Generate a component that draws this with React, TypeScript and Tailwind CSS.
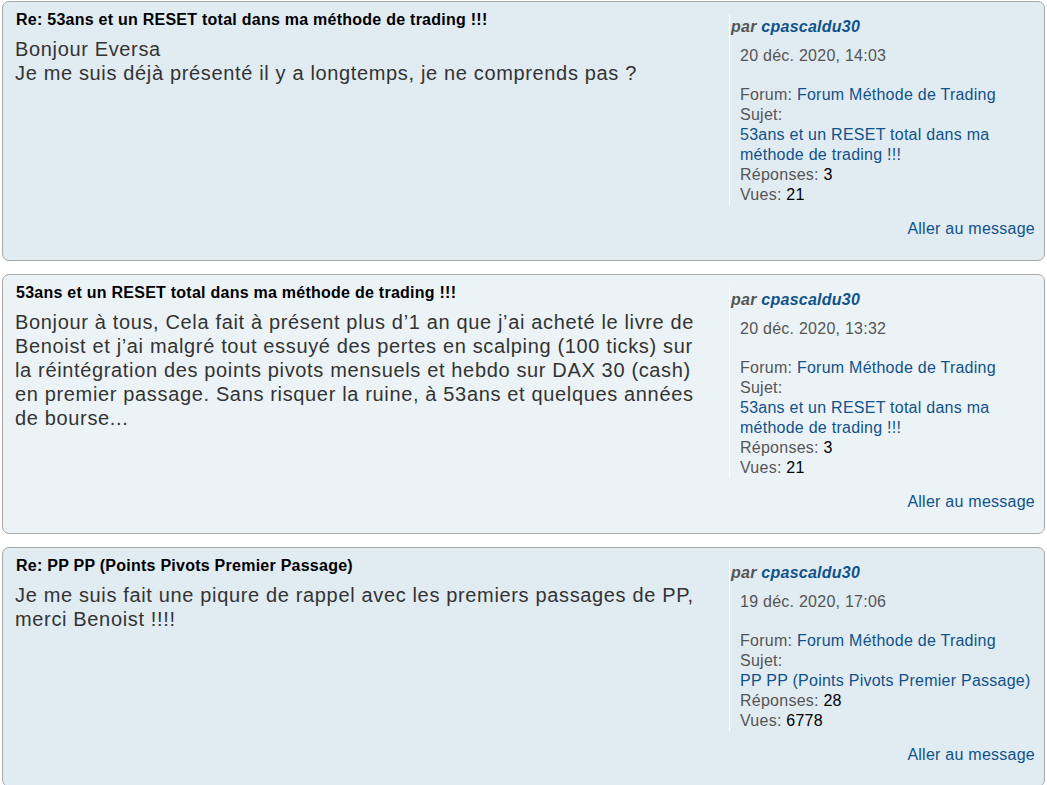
import React from "react";

type Post = {
  title: string;
  body: string[];
  date: string;
  topic: string;
  replies: string;
  views: string;
  bg: string;
};

const posts: Post[] = [
  {
    title: "Re: 53ans et un RESET total dans ma méthode de trading !!!",
    body: ["Bonjour Eversa", "Je me suis déjà présenté il y a longtemps, je ne comprends pas ?"],
    date: "20 déc. 2020, 14:03",
    topic: "53ans et un RESET total dans ma méthode de trading !!!",
    replies: "3",
    views: "21",
    bg: "bg-[#e1ebf2]",
  },
  {
    title: "53ans et un RESET total dans ma méthode de trading !!!",
    body: [
      "Bonjour à tous, Cela fait à présent plus d’1 an que j’ai acheté le livre de Benoist et j’ai malgré tout essuyé des pertes en scalping (100 ticks) sur la réintégration des points pivots mensuels et hebdo sur DAX 30 (cash) en premier passage. Sans risquer la ruine, à 53ans et quelques années de bourse...",
    ],
    date: "20 déc. 2020, 13:32",
    topic: "53ans et un RESET total dans ma méthode de trading !!!",
    replies: "3",
    views: "21",
    bg: "bg-[#ecf3f7]",
  },
  {
    title: "Re: PP PP (Points Pivots Premier Passage)",
    body: ["Je me suis fait une piqure de rappel avec les premiers passages de PP, merci Benoist !!!!"],
    date: "19 déc. 2020, 17:06",
    topic: "PP PP (Points Pivots Premier Passage)",
    replies: "28",
    views: "6778",
    bg: "bg-[#e1ebf2]",
  },
];

function SearchResult({ post }: { post: Post }) {
  return (
    <div className={`${post.bg} border border-[#a9a9a9] rounded-[7px] pl-[12px] pr-[9px] pb-[21px]`}>
      <div className="flex">
        <div className="w-[714px] shrink-0 pt-[8px] pr-[24px]">
          <h3 className="text-[16px] leading-[20px] tracking-[0.25px] font-bold text-black pl-[1px]">{post.title}</h3>
          <div className="mt-[7px] text-[20px] leading-[24px] tracking-[0.65px] text-[#333333]">
            {post.body.map((line, i) => (
              <p key={i}>{line}</p>
            ))}
          </div>
        </div>
        <div className="flex-1 mt-[12px] border-l border-white pl-[1px] text-[16px] leading-[20px] tracking-[0.25px] text-[#555555]">
          <div className="pt-[3px] font-bold italic">
            par <span className="text-[#105289]">cpascaldu30</span>
          </div>
          <div className="pl-[9px]">
            <div className="mt-[9px]">{post.date}</div>
            <div className="mt-[19px]">
              Forum: <span className="text-[#105289]">Forum Méthode de Trading</span>
            </div>
            <div>Sujet:</div>
            <div className="text-[#105289]">{post.topic}</div>
            <div>
              Réponses: <span className="text-black">{post.replies}</span>
            </div>
            <div>
              Vues: <span className="text-black">{post.views}</span>
            </div>
          </div>
        </div>
      </div>
      <div className="mt-[14px] text-right text-[16px] leading-[20px] tracking-[0.25px] text-[#105289]">Aller au message</div>
    </div>
  );
}

export default function App() {
  return (
    <div className="min-h-screen bg-white px-[2px] pt-[1px] font-['Liberation_Sans',Arial,sans-serif]">
      <div className="flex flex-col gap-[13px]">
        {posts.map((post, i) => (
          <SearchResult key={i} post={post} />
        ))}
      </div>
    </div>
  );
}
